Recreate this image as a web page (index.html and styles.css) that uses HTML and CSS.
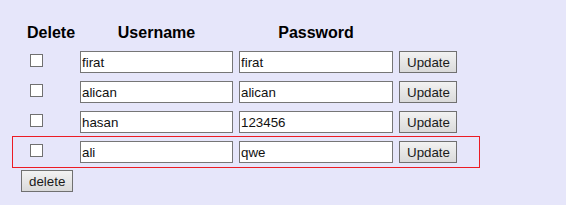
FILE: index.html
```html
<!DOCTYPE html>
<html lang="en">
<head>
    <meta charset="UTF-8">
    <meta name="viewport" content="width=device-width, initial-scale=1.0">
    <title>Users</title>
    <link rel="stylesheet" href="styles.css">
</head>
<body>
    <div class="users">
        <div class="row head">
            <div class="col-check">Delete</div>
            <div class="col-user">Username</div>
            <div class="col-pass">Password</div>
        </div>
        <div class="row">
            <div class="col-check"><input type="checkbox"></div>
            <input class="field" type="text" value="firat">
            <input class="field" type="text" value="firat">
            <button class="btn">Update</button>
        </div>
        <div class="row">
            <div class="col-check"><input type="checkbox"></div>
            <input class="field" type="text" value="alican">
            <input class="field" type="text" value="alican">
            <button class="btn">Update</button>
        </div>
        <div class="row">
            <div class="col-check"><input type="checkbox"></div>
            <input class="field" type="text" value="hasan">
            <input class="field" type="text" value="123456">
            <button class="btn">Update</button>
        </div>
        <div class="row active">
            <div class="col-check"><input type="checkbox"></div>
            <input class="field" type="text" value="ali">
            <input class="field" type="text" value="qwe">
            <button class="btn">Update</button>
        </div>
        <button class="btn delete-button">delete</button>
    </div>
</body>
</html>
```
FILE: styles.css
```css
body {
    margin: 0;
    padding: 0;
    background-color: #e6e6fa;
    font-family: "Liberation Sans", Arial, sans-serif;
}
.users {
    padding-top: 24px;
}
.row {
    display: flex;
    align-items: center;
    gap: 6px;
    width: 466px;
    height: 30px;
    margin-left: 13px;
}
.row.head {
    height: 23px;
    align-items: flex-start;
    font-size: 16px;
    font-weight: bold;
    line-height: 18px;
    color: #000;
}
.row.active {
    outline: 1px solid #ec1c24;
}
.col-check {
    width: 61px;
    align-self: flex-start;
}
.head .col-check {
    padding-left: 14px;
    box-sizing: border-box;
}
.col-check input {
    -webkit-appearance: none;
    appearance: none;
    display: block;
    box-sizing: border-box;
    width: 13px;
    height: 13px;
    margin: 7px 0 0 17px;
    border: 1px solid #707070;
    background-color: white;
}
.col-user {
    width: 153px;
    text-align: center;
}
.col-pass {
    width: 154px;
    text-align: center;
}
.field {
    box-sizing: border-box;
    width: 153px;
    height: 22px;
    margin: 0;
    padding: 1px 1px;
    border: 1px solid #767676;
    background-color: white;
    font-family: "Liberation Sans", Arial, sans-serif;
    font-size: 13.33px;
    color: #111;
}
.field + .field {
    width: 154px;
}
.btn {
    box-sizing: border-box;
    height: 22px;
    margin: 0;
    padding: 0 7px;
    border: 1px solid #707070;
    border-radius: 0;
    background: linear-gradient(#f2f2f2, #dadada);
    font-family: "Liberation Sans", Arial, sans-serif;
    font-size: 13.33px;
    color: #1a1a1a;
    cursor: pointer;
}
.row .btn {
    width: 58px;
}
.delete-button {
    width: 52px;
    margin: 3px 0 0 21px;
}
```
